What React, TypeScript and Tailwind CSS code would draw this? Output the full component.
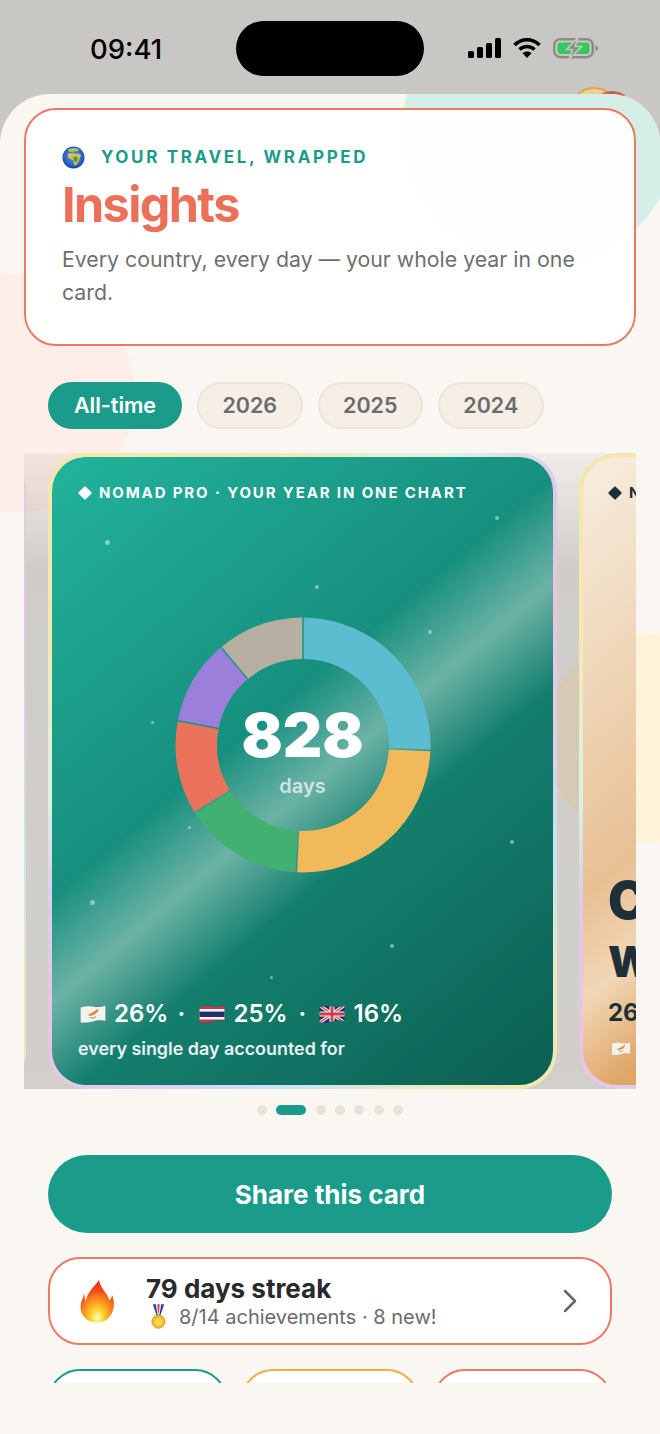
import { ChevronRight } from 'lucide-react';

const segments = [
  { from: 0, to: 92.5, color: '#5bbdcf' },
  { from: 92.5, to: 183, color: '#f2b95b' },
  { from: 183, to: 238, color: '#41b070' },
  { from: 238, to: 281, color: '#ec735b' },
  { from: 281, to: 320, color: '#9c7fdb' },
  { from: 320, to: 360, color: '#b8afa3' },
];

const sparkles = [
  { x: 55, y: 85, r: 2.5 },
  { x: 265, y: 130, r: 2 },
  { x: 445, y: 61, r: 2 },
  { x: 378, y: 175, r: 2 },
  { x: 100, y: 265, r: 1.5 },
  { x: 137, y: 370, r: 1.5 },
  { x: 460, y: 385, r: 2 },
  { x: 40, y: 445, r: 2.5 },
  { x: 340, y: 489, r: 2 },
  { x: 219, y: 520, r: 1.5 },
];

function polar(r: number, deg: number) {
  const a = ((deg - 90) * Math.PI) / 180;
  return `${(128 + r * Math.cos(a)).toFixed(2)} ${(128 + r * Math.sin(a)).toFixed(2)}`;
}

function arc(from: number, to: number) {
  const large = to - from > 180 ? 1 : 0;
  const o = 0.35;
  const i = 0.5;
  return `M${polar(127.5, from + o)} A127.5 127.5 0 ${large} 1 ${polar(127.5, to - o)} L${polar(86, to - i)} A86 86 0 ${large} 0 ${polar(86, from + i)} Z`;
}

function Flag({ kind, className }: { kind: 'cy' | 'th' | 'uk'; className: string }) {
  const shape = 'M0.5 3.5 Q6 1 13 2.5 T25.5 1.5 V17 Q20 15.5 13 17.5 T0.5 18.5 Z';
  const id = `flag-${kind}-${className.length}`;
  return (
    <svg viewBox="0 0 26 20" className={className}>
      <defs>
        <clipPath id={id}><path d={shape} /></clipPath>
      </defs>
      <g clipPath={`url(#${id})`}>
        {kind === 'cy' && (
          <>
            <rect width="26" height="20" fill="#f3f2ee" />
            <path d="M7.5 11 L12.5 8.5 L18.5 4.5 L18 7.5 L14.5 10.5 L10.5 12 Z" fill="#e8862e" />
            <path d="M10 13.5 Q13 15.5 16 12.5" stroke="#6fa77a" strokeWidth="1" fill="none" />
          </>
        )}
        {kind === 'th' && (
          <>
            <rect width="26" height="20" fill="#d3344a" />
            <rect y="5" width="26" height="10.5" fill="#f6f5f5" />
            <rect y="7.6" width="26" height="5.4" fill="#272c6c" />
          </>
        )}
        {kind === 'uk' && (
          <>
            <rect width="26" height="20" fill="#232f68" />
            <path d="M0 1 L26 19 M26 1 L0 19" stroke="#f2f2f2" strokeWidth="3.4" />
            <path d="M0 1 L26 19 M26 1 L0 19" stroke="#d33a4a" strokeWidth="1.2" />
            <path d="M13 0 V20 M0 10 H26" stroke="#f2f2f2" strokeWidth="5" />
            <path d="M13 0 V20 M0 10 H26" stroke="#d33a4a" strokeWidth="2.8" />
          </>
        )}
      </g>
      <path d={shape} fill="none" stroke="#000" strokeOpacity="0.14" strokeWidth="0.5" />
    </svg>
  );
}

function Card({ children }: { children?: React.ReactNode }) {
  return (
    <div className="w-[509px] h-[636px] shrink-0 rounded-[38px] p-[4px] bg-[linear-gradient(140deg,#f5e7a8_0%,#f3e8b4_18%,#dcf3e4_32%,#dccdea_42%,#eac3e2_55%,#dcd0ee_68%,#c6e4f5_78%,#e6e8c8_88%,#f3e8a8_100%)]">
      {children}
    </div>
  );
}

function CardLabel() {
  return (
    <div className="relative flex items-center h-[20px] text-[15px] leading-[20px] font-bold tracking-[1.87px] whitespace-nowrap">
      <span className="ml-[2px] mr-[9px] w-[10px] h-[10px] rotate-45 rounded-[1px] bg-current shrink-0"></span>
      NOMAD PRO · YOUR YEAR IN ONE CHART
    </div>
  );
}

export default function App() {
  return (
    <div className="relative w-[660px] h-[1434px] overflow-hidden bg-[#c9c7c3] [font-family:Inter,sans-serif]">
      {/* status bar */}
      <div className="relative h-[94px]">
        <div className="absolute left-[90px] top-[32px] text-[27.5px] leading-[34px] font-medium text-black">09:41</div>
        <div className="absolute left-[236px] top-[21px] w-[188px] h-[55px] rounded-full bg-black"></div>
        <svg viewBox="0 0 34 20" className="absolute left-[467px] top-[38px] w-[34px] h-[20px]">
          <rect x="1" y="13" width="6" height="7" rx="1.5" fill="#000" />
          <rect x="10" y="9" width="6" height="11" rx="1.5" fill="#000" />
          <rect x="19" y="5" width="6" height="15" rx="1.5" fill="#000" />
          <rect x="28" y="0" width="6" height="20" rx="1.5" fill="#000" />
        </svg>
        <svg viewBox="0 0 28 20" className="absolute left-[513px] top-[38px] w-[28px] h-[20px]" fill="none" stroke="#000" strokeWidth="3.4">
          <path d="M1.5 7 C8.5 0 19.5 0 26.5 7" />
          <path d="M6.5 11.5 C10.5 7.5 17.5 7.5 21.5 11.5" />
          <path d="M14 20 L9.5 15.2 C12 13 16 13 18.5 15.2 Z" fill="#000" stroke="none" />
        </svg>
        <svg viewBox="0 0 46 22" className="absolute left-[553px] top-[37px] w-[46px] h-[22px]">
          <rect x="1.2" y="2.2" width="38.6" height="18" rx="6" fill="none" stroke="#8c8b88" strokeWidth="2.4" />
          <rect x="4.5" y="5.5" width="32" height="11.5" rx="3" fill="#35c85f" />
          <path d="M42.5 8 Q45 9 45 11.2 Q45 13.5 42.5 14.5 Z" fill="#8c8b88" />
          <path d="M25 0.5 L13.5 12.5 H19.5 L16 22 L28.5 9.5 H22 Z" fill="#8c8b88" stroke="#c9c7c3" strokeWidth="1.6" />
        </svg>
        {/* avatar peeking behind the sheet */}
        <div className="absolute left-[569px] top-[87px] w-[50px] h-[50px] rounded-full bg-[#edcf92] border-2 border-[#d9a94f]"></div>
        <div className="absolute left-[591px] top-[91px] w-[42px] h-[42px] rounded-full bg-[#cf5f4c]"></div>
      </div>

      {/* sheet */}
      <div className="relative h-[1340px] rounded-t-[50px] overflow-hidden bg-[#faf7f2]">
        <div className="absolute left-[402px] top-[-102px] w-[276px] h-[276px] rounded-full bg-[#d5eee8]"></div>
        <div className="absolute left-[-105px] top-[179px] w-[240px] h-[240px] rounded-full bg-[#fdeee7]"></div>
        <div className="absolute left-[545px] top-[539px] w-[210px] h-[210px] rounded-full bg-[#fff3d9]"></div>

        <div className="relative h-[1289px] overflow-hidden pt-[14px]">
          {/* header */}
          <div className="mx-[24px] h-[238px] rounded-[32px] border-2 border-[#ec7a62] bg-white/95 pl-[36px] pr-[30px] pt-[36px]">
            <div className="flex items-center h-[22px]">
              <svg viewBox="0 0 24 24" className="w-[23px] h-[23px]">
                <defs>
                  <radialGradient id="globe" cx="50%" cy="45%" r="60%">
                    <stop offset="0%" stopColor="#4a9be8" />
                    <stop offset="70%" stopColor="#2a62c4" />
                    <stop offset="100%" stopColor="#0f2f86" />
                  </radialGradient>
                </defs>
                <circle cx="12" cy="12" r="11.5" fill="url(#globe)" />
                <path d="M6.5 3.5 Q12 1 18 3.5 L16 5.5 L10 6 L7 6 Z" fill="#b9c25a" />
                <path d="M6 8 L11 7 L13 8 L17 7.5 L20 10 L18.5 12.5 L18 15 L15.5 19 L13.5 20.5 L12 18 L12 14.5 L8.5 13.5 L6 11.5 Z" fill="#d4c052" />
                <path d="M11.5 11.5 L16 11 L16.5 14.5 L14 17.5 L12.8 15 Z" fill="#4f9a3f" />
              </svg>
              <span className="ml-[16px] text-[17px] leading-[22px] font-bold tracking-[2.65px] text-[#1b9c8a]">YOUR TRAVEL, WRAPPED</span>
            </div>
            <h1 className="mt-[8px] text-[48.5px] leading-[58px] font-bold tracking-[-1.6px] text-[#ec7059]">Insights</h1>
            <p className="mt-[9px] text-[21.3px] leading-[33px] text-[#6f6f6f]">Every country, every day — your whole year in one card.</p>
          </div>

          {/* year pills */}
          <div className="mt-[36px] mx-[48px] flex gap-[15px]">
            <button className="w-[134px] h-[47px] rounded-full bg-[#1b9c8a] text-white text-[21.5px] font-semibold">All-time</button>
            {['2026', '2025', '2024'].map((year) => (
              <button key={year} className="w-[105.5px] h-[47px] rounded-full border-2 border-[#ebe5da] bg-[#f5efe6] text-[#6b6b6b] text-[21.5px] font-semibold">{year}</button>
            ))}
          </div>

          {/* carousel */}
          <div className="mt-[24px] mx-[24px] h-[636px] overflow-hidden bg-[linear-gradient(to_bottom,rgba(0,0,0,0.04),rgba(0,0,0,0.17)_18%,rgba(0,0,0,0.16))]">
            <div className="flex gap-[22px] ml-[-507px]">
              <Card />
              <Card>
                <div className="relative h-full rounded-[34px] overflow-hidden px-[26px] pt-[26px] text-white bg-[linear-gradient(140deg,#22b39c_0%,#178f7e_42%,#6cb3a6_52%,#147f6e_62%,#0b5f52_100%)]">
                  {sparkles.map((s) => (
                    <div key={s.x} className="absolute rounded-full bg-white/45" style={{ left: s.x - s.r, top: s.y - s.r, width: s.r * 2, height: s.r * 2 }}></div>
                  ))}
                  <CardLabel />
                  <div className="relative mt-[114px] mx-auto w-[256px] h-[256px]">
                    <svg viewBox="0 0 256 256" className="w-[256px] h-[256px]">
                      {segments.map((s) => (
                        <path key={s.color} d={arc(s.from, s.to)} fill={s.color} />
                      ))}
                    </svg>
                    <div className="absolute inset-0 flex flex-col items-center justify-center pt-[12px]">
                      <div className="text-[61px] leading-[62px] font-black">828</div>
                      <div className="mt-[8px] text-[20px] leading-[24px] font-semibold text-white/70">days</div>
                    </div>
                  </div>
                  <div className="relative mt-[126px] flex items-center h-[30px] text-[24px] font-semibold whitespace-nowrap">
                    <Flag kind="cy" className="w-[26px] h-[20px] ml-[2px]" />
                    <span className="ml-[8px]">26%</span>
                    <span className="ml-[9px] w-[6px] text-center">·</span>
                    <Flag kind="th" className="w-[26px] h-[20px] ml-[16px]" />
                    <span className="ml-[8px]">25%</span>
                    <span className="ml-[11px] w-[6px] text-center">·</span>
                    <Flag kind="uk" className="w-[26px] h-[20px] ml-[14px]" />
                    <span className="ml-[9px]">16%</span>
                  </div>
                  <div className="relative mt-[9px] text-[17.9px] leading-[22px] font-semibold text-white/90">every single day accounted for</div>
                </div>
              </Card>
              <Card>
                <div className="relative h-full rounded-[34px] overflow-hidden px-[25px] pt-[26px] bg-[linear-gradient(140deg,#f7eee0_0%,#e8c094_42%,#f1d7b6_52%,#e0a768_62%,#d98f45_100%)] text-[#1f2f3a] whitespace-nowrap">
                  <CardLabel />
                  <div className="mt-[369px] text-[52px] leading-[58px] font-black">Cyprus</div>
                  <div className="mt-[3px] text-[42px] leading-[58px] font-black">Wins</div>
                  <div className="mt-[7px] text-[24px] leading-[30px] font-bold">26% of your days</div>
                  <Flag kind="cy" className="mt-[13px] ml-[3px] w-[20px] h-[15px]" />
                </div>
              </Card>
            </div>
          </div>

          {/* dots */}
          <div className="mt-[16px] flex justify-center items-center gap-[9.3px]">
            <span className="w-[10px] h-[10px] rounded-full bg-[#e9e2d8]"></span>
            <span className="w-[30px] h-[10px] rounded-full bg-[#1b9c8a]"></span>
            {[1, 2, 3, 4, 5].map((n) => (
              <span key={n} className="w-[10px] h-[10px] rounded-full bg-[#e9e2d8]"></span>
            ))}
          </div>

          {/* share */}
          <button className="block mt-[40px] mx-[48px] w-[564px] h-[78px] rounded-full bg-[#1b9c8a] text-white text-[26px] font-bold">Share this card</button>

          {/* streak */}
          <div className="mt-[24px] mx-[48px] h-[88px] rounded-[32px] border-2 border-[#ec7a62] bg-white flex items-center pl-[30px] pr-[20px]">
            <svg viewBox="0 0 34 43" className="w-[34px] h-[43px] shrink-0">
              <defs>
                <radialGradient id="flame" cx="50%" cy="88%" r="80%">
                  <stop offset="0%" stopColor="#fffbd0" />
                  <stop offset="20%" stopColor="#ffdc3a" />
                  <stop offset="48%" stopColor="#ff9a1e" />
                  <stop offset="78%" stopColor="#f5501a" />
                  <stop offset="100%" stopColor="#e8301a" />
                </radialGradient>
              </defs>
              <path d="M19 0 C20 6 24 10 27 15 C28.5 17 29 19 29 20 C31 19 32 17 32 15 C34 20 34.5 25 33 30 C31 38 25 42.5 17 42.5 C9 42.5 3 38 1 31 C0 26 1 21 3 18 L4 13 L5 19 C5.5 20.5 6 21 6 21 C6 14 13 8 19 0 Z" fill="url(#flame)" />
            </svg>
            <div className="ml-[32px] flex-1">
              <div className="text-[26px] leading-[31px] font-bold text-[#2a2a2a]">79 days streak</div>
              <div className="flex items-center text-[20px] leading-[26px] text-[#6b6b6b]">
                <svg viewBox="0 0 16 26" className="w-[15px] h-[25px] ml-[5px] mr-[13px]">
                  <path d="M2 0 H6 L8 8 L10 0 H14 L10 12 H6 Z" fill="#27408f" />
                  <path d="M5 0 H7 L8 8 L9 0 H11 L9 11 H7 Z" fill="#f4f4f4" />
                  <path d="M6.8 0 H9.2 L8.5 9 H7.5 Z" fill="#d33a3a" />
                  <circle cx="8" cy="18.5" r="7" fill="#f0bd2c" stroke="#d9971c" strokeWidth="1" />
                  <circle cx="8" cy="18.5" r="4" fill="#f7d558" />
                </svg>
                <span>8/14 achievements · 8 new!</span>
              </div>
            </div>
            <ChevronRight size={40} strokeWidth={1.5} color="#666666" />
          </div>

          {/* stat tiles, cut off by the scroll area */}
          <div className="mt-[24px] mx-[48px] grid grid-cols-3 gap-[14px]">
            <div className="h-[80px] rounded-[32px] border-2 border-[#1b9c8a] bg-white"></div>
            <div className="h-[80px] rounded-[32px] border-2 border-[#e9ae4f] bg-white"></div>
            <div className="h-[80px] rounded-[32px] border-2 border-[#ec7a62] bg-white"></div>
          </div>
        </div>
      </div>
    </div>
  );
}
